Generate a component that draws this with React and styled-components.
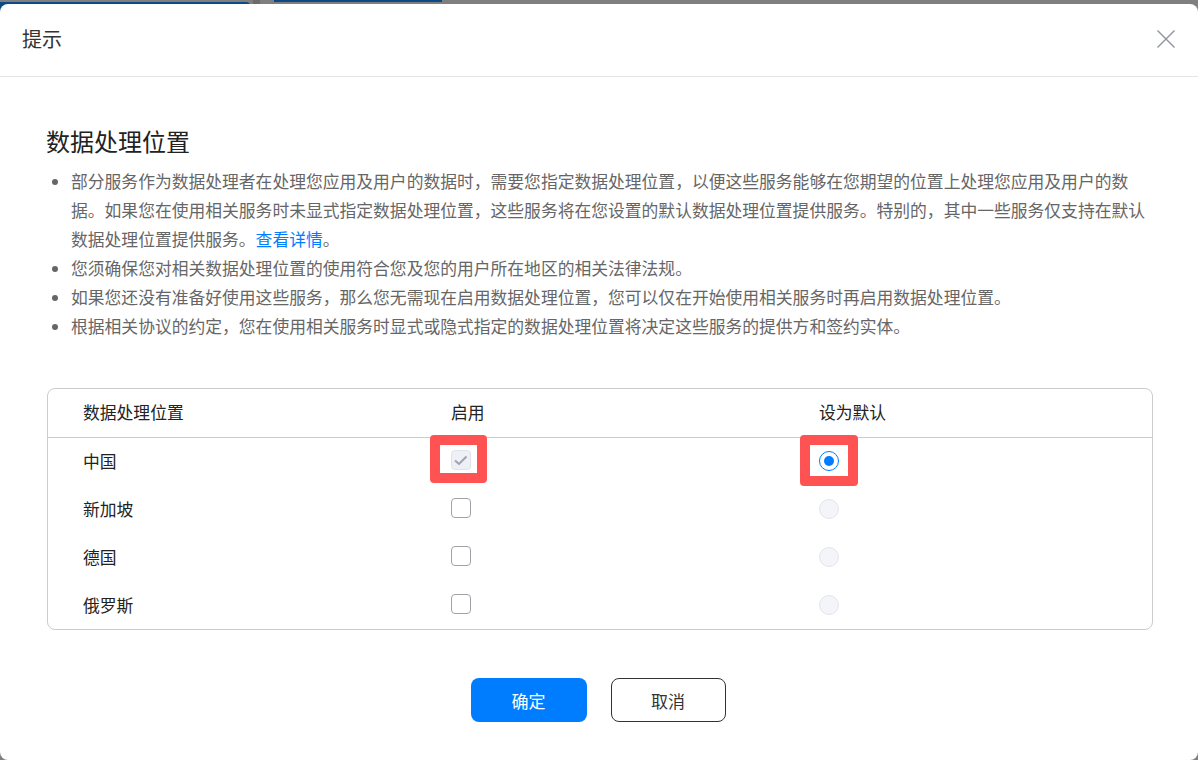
import React from 'react';
import styled, { createGlobalStyle } from 'styled-components';

const GlobalStyle = createGlobalStyle`
    html, body {
        margin: 0;
        padding: 0;
        height: 760px;
        overflow: hidden;
        background: #7f7f7f;
        font-family: "Noto Sans CJK SC", "Liberation Sans", sans-serif;
    }
`
const Page = styled.div`
    width: 1198px;
    height: 760px;
    display: flex;
    flex-direction: column;
`
const Strip = styled.div`
    height: 4px;
    flex: none;
    display: flex;
    background: #7f7f7f;
`
const Tab = styled.div`
    flex: none;
    width: ${props => props.width}px;
    margin-left: ${props => props.left}px;
    margin-top: ${props => props.top}px;
    height: ${props => props.height}px;
    background: ${props => props.color};
    border-top-right-radius: ${props => props.round}px;
`
const Modal = styled.div`
    position: relative;
    flex: 1;
    display: flex;
    flex-direction: column;
    background: #fff;
    border-radius: 8px;
`
const Header = styled.div`
    height: 72px;
    flex: none;
    border-bottom: 1px solid #e5e5e5;
    display: flex;
    align-items: center;
    justify-content: space-between;
    padding: 0 22px;
`
const HeaderTitle = styled.div`
    font-size: 20px;
    color: #333;
    margin-bottom: 3px;
`
const CloseIcon = styled.svg`
    display: block;
    width: 18px;
    height: 18px;
    margin-right: 1px;
    margin-bottom: 2px;
    stroke: #8f949c;
    stroke-width: 1.4;
    fill: none;
`
const Body = styled.div`
    flex: 1;
    padding: 49px 45px 0 46px;
`
const Title = styled.h2`
    margin: 0 0 11px;
    font-size: 24px;
    line-height: 30px;
    font-weight: 400;
    color: #222;
`
const Notes = styled.ul`
    margin: 0;
    padding: 0 0 0 25px;
    list-style: disc;
`
const Note = styled.li`
    font-size: 16.8px;
    line-height: 29px;
    color: #666;
`
const DetailLink = styled.a`
    color: #007dff;
    text-decoration: none;
`
const Table = styled.div`
    margin-top: 47px;
    margin-left: 1px;
    width: 1106px;
    height: 242px;
    box-sizing: border-box;
    border: 1px solid #ccc;
    border-radius: 8px;
`
const Row = styled.div`
    display: grid;
    grid-template-columns: 367px 368px 1fr;
    height: ${props => (props.head ? 49 : 48)}px;
    box-sizing: border-box;
    border-bottom: ${props => (props.head ? '1px solid #ccc' : 'none')};
`
const Cell = styled.div`
    display: flex;
    align-items: center;
    padding-left: 36px;
    padding-bottom: 2px;
    font-size: 16.8px;
    color: #222;

    &:first-child {
        padding-left: 35px;
    }
`
const Control = styled.span`
    position: relative;
    display: block;
    width: 20px;
    height: 20px;
    margin-bottom: ${props => props.lift}px;
`
const Highlight = styled.span`
    position: absolute;
    top: ${props => props.top}px;
    left: ${props => props.side}px;
    right: ${props => props.right}px;
    bottom: ${props => props.bottom}px;
    border: 10px solid #ff5353;
    border-radius: 4px;
`
const CheckBox = styled.span`
    display: flex;
    align-items: center;
    justify-content: center;
    width: 20px;
    height: 20px;
    box-sizing: border-box;
    border-radius: 4px;
    border: 1px solid ${props => (props.disabled ? '#dfe3ee' : '#a0a3a8')};
    background: ${props => (props.disabled ? '#eef0f7' : '#fff')};
`
const CheckMark = styled.svg`
    display: block;
    width: 14px;
    height: 14px;
    stroke: #a0a3ab;
    stroke-width: 2;
    fill: none;
`
const Radio = styled.span`
    display: flex;
    align-items: center;
    justify-content: center;
    width: 20px;
    height: 20px;
    box-sizing: border-box;
    border-radius: 50%;
    border: 1px solid ${props => (props.checked ? '#007dff' : '#e3e5ec')};
    background: ${props => (props.checked ? '#fff' : '#f4f5f9')};
`
const RadioDot = styled.span`
    display: block;
    width: 10px;
    height: 10px;
    border-radius: 50%;
    background: #007dff;
`
const Footer = styled.div`
    display: flex;
    justify-content: center;
    gap: 24px;
    margin-top: 48px;
    margin-left: -3px;
`
const Button = styled.button`
    width: ${props => (props.primary ? 116 : 115)}px;
    height: 44px;
    box-sizing: border-box;
    border-radius: 8px;
    font-family: inherit;
    font-size: 17px;
    padding: 0;
    color: ${props => (props.primary ? '#fff' : '#333')};
    background: ${props => (props.primary ? '#007dff' : '#fff')};
    border: ${props => (props.primary ? 'none' : '1px solid #333')};
`

const regions = [
    { name: '中国', enabled: true, isDefault: true },
    { name: '新加坡' },
    { name: '德国' },
    { name: '俄罗斯' },
];

export default function App() {
    return (
        <Page>
            <GlobalStyle />
            <Strip>
                <Tab width={250} left={0} top={2} height={10} color="#0b4a87" round={4} />
                <Tab width={7} left={3} top={0} height={4} color="#6c6c6c" />
                <Tab width={168} left={14} top={0} height={2} color="#0b4a87" />
            </Strip>
            <Modal>
                <Header>
                    <HeaderTitle>提示</HeaderTitle>
                    <CloseIcon viewBox="0 0 18 18">
                        <path d="M0.5 0.5 L17.5 17.5 M17.5 0.5 L0.5 17.5" />
                    </CloseIcon>
                </Header>
                <Body>
                    <Title>数据处理位置</Title>
                    <Notes>
                        <Note>部分服务作为数据处理者在处理您应用及用户的数据时，需要您指定数据处理位置，以便这些服务能够在您期望的位置上处理您应用及用户的数据。如果您在使用相关服务时未显式指定数据处理位置，这些服务将在您设置的默认数据处理位置提供服务。特别的，其中一些服务仅支持在默认数据处理位置提供服务。<DetailLink href="#">查看详情</DetailLink>。</Note>
                        <Note>您须确保您对相关数据处理位置的使用符合您及您的用户所在地区的相关法律法规。</Note>
                        <Note>如果您还没有准备好使用这些服务，那么您无需现在启用数据处理位置，您可以仅在开始使用相关服务时再启用数据处理位置。</Note>
                        <Note>根据相关协议的约定，您在使用相关服务时显式或隐式指定的数据处理位置将决定这些服务的提供方和签约实体。</Note>
                    </Notes>
                    <Table>
                        <Row head>
                            <Cell>数据处理位置</Cell>
                            <Cell>启用</Cell>
                            <Cell>设为默认</Cell>
                        </Row>
                        {regions.map(region => (
                            <Row key={region.name}>
                                <Cell>{region.name}</Cell>
                                <Cell>
                                    <Control lift={2}>
                                        <CheckBox disabled={region.enabled}>
                                            {region.enabled && (
                                                <CheckMark viewBox="0 0 14 14">
                                                    <path d="M1 7.5 L5 11 L12.5 3.5" />
                                                </CheckMark>
                                            )}
                                        </CheckBox>
                                        {region.enabled && <Highlight top={-15} side={-21} right={-16} bottom={-13} />}
                                    </Control>
                                </Cell>
                                <Cell>
                                    <Control lift={0}>
                                        <Radio checked={region.isDefault}>
                                            {region.isDefault && <RadioDot />}
                                        </Radio>
                                        {region.isDefault && <Highlight top={-16} side={-19} right={-19} bottom={-15} />}
                                    </Control>
                                </Cell>
                            </Row>
                        ))}
                    </Table>
                    <Footer>
                        <Button primary>确定</Button>
                        <Button>取消</Button>
                    </Footer>
                </Body>
            </Modal>
        </Page>
    );
}
